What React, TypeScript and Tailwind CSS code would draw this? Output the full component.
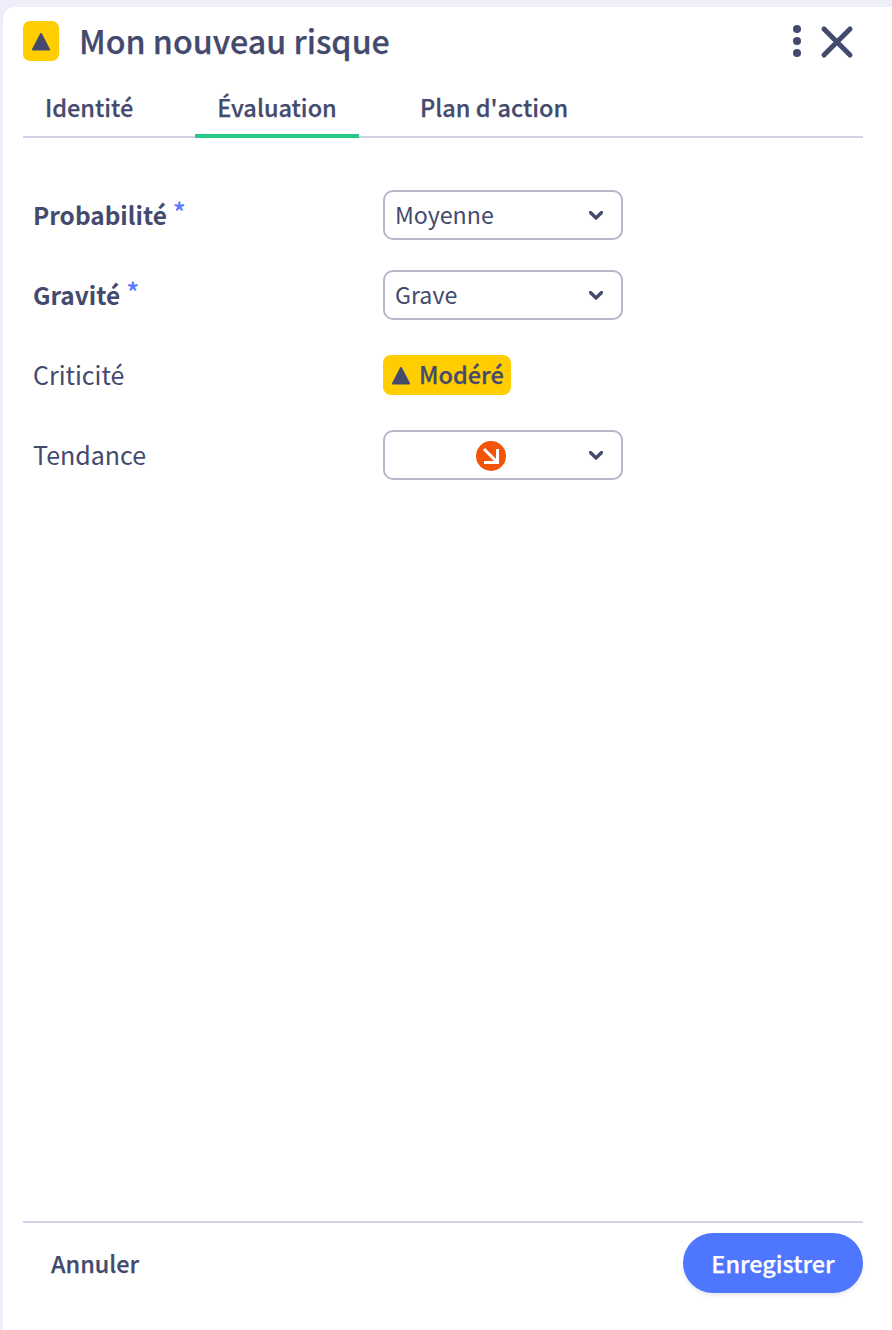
const font = "font-['Noto_Sans_CJK_SC','Liberation_Sans',sans-serif]";
const semi = "font-medium [-webkit-text-stroke:0.25px]";

function Triangle({ className }: { className: string }) {
  return (
    <svg viewBox="0 0 18 19" className={className}>
      <path d="M9 2 L17 17.5 H1 Z" fill="#434a6e" stroke="#434a6e" strokeWidth="2" strokeLinejoin="round" />
    </svg>
  );
}

function Select({ children }: { children: React.ReactNode }) {
  return (
    <div className="flex h-[50px] w-[240px] items-center justify-between rounded-[10px] border-2 border-[#b6b8c9] bg-white pl-[10px] pr-[18px]">
      {children}
      <svg viewBox="0 0 14 9" className="h-[9px] w-[14px]">
        <path d="M1.5 1.5 L7 7 L12.5 1.5" fill="none" stroke="#434a6e" strokeWidth="3.2" strokeLinecap="round" strokeLinejoin="round" />
      </svg>
    </div>
  );
}

function Row({ label, required, children }: { label: string; required?: boolean; children: React.ReactNode }) {
  return (
    <div className="flex h-[50px] items-center">
      <div className={`w-[360px] pb-[2px] pl-[10px] leading-[32px] ${required ? "text-[24.4px] font-bold" : "text-[25px]"}`}>
        {label}
        {required && <span className="relative -top-[2px] ml-[6px] text-[27px] font-medium text-[#5a7aff]">*</span>}
      </div>
      {children}
    </div>
  );
}

export default function App() {
  return (
    <div className={`${font} h-[1330px] overflow-hidden bg-[#eeeefb] pl-[3px] pt-[7px] text-[#434a6e]`}>
      <div className="flex h-[1323px] flex-col rounded-tl-[12px] bg-white pl-[20px] pr-[29px]">
        <div className="flex h-[69px] items-start pt-[14px]">
          <div className="flex h-[40px] w-[36px] items-center justify-center rounded-[7px] bg-[#ffcd00]">
            <Triangle className="h-[19px] w-[18px]" />
          </div>
          <h1 className={`ml-[20px] -mt-[1px] text-[32.2px] leading-[40px] ${semi}`}>Mon nouveau risque</h1>
          <div className="ml-auto flex items-start pt-[4px]">
            <div className="flex flex-col gap-[4px]">
              <span className="h-[8px] w-[8px] rounded-full bg-[#434a6e]" />
              <span className="h-[8px] w-[8px] rounded-full bg-[#434a6e]" />
              <span className="h-[8px] w-[8px] rounded-full bg-[#434a6e]" />
            </div>
            <svg viewBox="0 0 34 34" className="ml-[19px] mr-[9px] h-[34px] w-[34px]">
              <path d="M4 4 L30 30 M30 4 L4 30" stroke="#434a6e" strokeWidth="5" strokeLinecap="round" />
            </svg>
          </div>
        </div>
        <div className={`flex h-[62px] items-end border-b-2 border-[#d2d3e6] text-[23.5px] leading-[32px] ${semi}`}>
          <div className="flex h-[54px] w-[172px] items-center pb-[4px] pl-[22px]">Identité</div>
          <div className="-mb-[2px] flex h-[56px] w-[164px] items-center justify-center border-b-4 border-[#26c987] pb-[2px]">Évaluation</div>
          <div className="flex h-[54px] items-center pb-[4px] pl-[61px]">Plan d'action</div>
        </div>
        <div className="mt-[52px] flex flex-col gap-[30px]">
          <Row label="Probabilité" required>
            <Select><span className="pb-[2px] text-[23.2px]">Moyenne</span></Select>
          </Row>
          <Row label="Gravité" required>
            <Select><span className="pb-[2px] text-[23.2px]">Grave</span></Select>
          </Row>
          <Row label="Criticité">
            <div className={`flex h-[40px] w-[128px] items-center rounded-[8px] bg-[#ffcd00] pl-[9px] text-[23.5px] ${semi}`}>
              <Triangle className="h-[19px] w-[18px]" />
              <span className="ml-[9px]">Modéré</span>
            </div>
          </Row>
          <Row label="Tendance">
            <Select>
              <svg viewBox="0 0 30 30" className="ml-[81px] mt-[2px] h-[30px] w-[30px]">
                <circle cx="15" cy="15" r="15" fill="#f4530a" />
                <path d="M8 8 L21 21 M8 21.5 H21.5 V8" fill="none" stroke="#fff" strokeWidth="3" />
              </svg>
            </Select>
          </Row>
        </div>
        <div className="mt-auto mb-[37px] flex h-[72px] items-start justify-between border-t-2 border-[#d2d3e6] pt-[10px]">
          <button className={`h-[60px] pl-[28px] text-[23.4px] leading-[32px] ${semi}`}>Annuler</button>
          <button className={`h-[60px] w-[180px] rounded-full bg-[#4f76ff] text-[23.4px] leading-[32px] text-white shadow-[0_3px_3px_rgba(67,74,110,0.1)] ${semi}`}>Enregistrer</button>
        </div>
      </div>
    </div>
  );
}
